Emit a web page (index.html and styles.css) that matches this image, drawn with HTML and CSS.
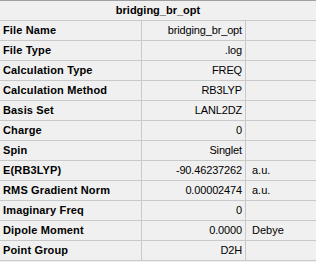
FILE: index.html
```html
<!DOCTYPE html>
<html lang="en">
<head>
  <meta charset="UTF-8" />
  <title>Summary - bridging_br_opt</title>
  <link rel="stylesheet" href="styles.css">
</head>
<body>
  <div class="sheet">
    <div class="title">bridging_br_opt</div>

    <div class="row"><div class="label">File Name</div><div class="value">bridging_br_opt</div><div class="unit"></div></div>
    <div class="row"><div class="label">File Type</div><div class="value">.log</div><div class="unit"></div></div>
    <div class="row"><div class="label">Calculation Type</div><div class="value">FREQ</div><div class="unit"></div></div>
    <div class="row"><div class="label">Calculation Method</div><div class="value">RB3LYP</div><div class="unit"></div></div>
    <div class="row"><div class="label">Basis Set</div><div class="value">LANL2DZ</div><div class="unit"></div></div>
    <div class="row"><div class="label">Charge</div><div class="value">0</div><div class="unit"></div></div>
    <div class="row"><div class="label">Spin</div><div class="value">Singlet</div><div class="unit"></div></div>
    <div class="row"><div class="label">E(RB3LYP)</div><div class="value">-90.46237262</div><div class="unit">a.u.</div></div>
    <div class="row"><div class="label">RMS Gradient Norm</div><div class="value">0.00002474</div><div class="unit">a.u.</div></div>
    <div class="row"><div class="label">Imaginary Freq</div><div class="value">0</div><div class="unit"></div></div>
    <div class="row"><div class="label">Dipole Moment</div><div class="value">0.0000</div><div class="unit">Debye</div></div>
    <div class="row"><div class="label">Point Group</div><div class="value">D2H</div><div class="unit"></div></div>
  </div>
</body>
</html>
```

FILE: styles.css
```css
:root {
  --panel-bg: #f0f0f0;
  --grid-line: #c9c9c9;
  --top-line: #a0a0a0;
  --text-color: #000000;
}
* {
  margin: 0;
  padding: 0;
  box-sizing: border-box;
}
body {
  background: var(--panel-bg);
  color: var(--text-color);
  font-family: 'Liberation Sans', Arial, sans-serif;
  font-size: 11px;
}
.sheet {
  width: 316px;
  border-top: 1px solid var(--top-line);
}
.title {
  height: 20px;
  line-height: 19px;
  border-bottom: 1px solid var(--grid-line);
  text-align: center;
  font-weight: 700;
}
.row {
  display: flex;
  height: 20px;
  line-height: 19px;
  border-bottom: 1px solid var(--grid-line);
}
.label {
  width: 142px;
  padding-left: 3px;
  border-right: 1px solid var(--grid-line);
  font-weight: 700;
  letter-spacing: 0.15px;
  white-space: nowrap;
}
.value {
  width: 104px;
  padding-right: 3px;
  border-right: 1px solid var(--grid-line);
  text-align: right;
  letter-spacing: -0.15px;
  white-space: nowrap;
}
.unit {
  flex: 1;
  padding-left: 6px;
  white-space: nowrap;
}
```
